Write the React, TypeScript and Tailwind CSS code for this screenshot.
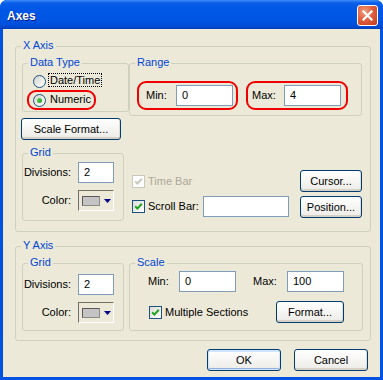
import React from "react";

function Group({ label, className, children }: { label: string; className: string; children?: React.ReactNode }) {
  return (
    <div className={`relative border border-[#D0D0BF] rounded-[3px] ${className}`}>
      <span className="absolute -top-[8px] left-[5px] px-[2px] bg-[#ECE9D8] text-[#0046D5] leading-[13px] whitespace-nowrap">
        {label}
      </span>
      {children}
    </div>
  );
}

function Btn({ label, className, isDefault }: { label: string; className: string; isDefault?: boolean }) {
  return (
    <div
      className={`flex items-center justify-center rounded-[3px] border border-[#003C74] bg-gradient-to-b from-white to-[#ECEBE6] ${
        isDefault
          ? "shadow-[inset_0_0_0_1px_#CEE7FF,inset_0_-2px_0_#97AEE2,inset_0_2px_0_#CEE7FF]"
          : "shadow-[inset_0_-2px_0_#D6D0C5,inset_-1px_0_0_#E2DED3]"
      } ${className}`}
    >
      <span className="leading-[13px]">{label}</span>
    </div>
  );
}

function Check({ disabled }: { disabled?: boolean }) {
  return (
    <span
      className={`w-[13px] h-[13px] shrink-0 flex items-center justify-center border ${
        disabled ? "border-[#CAC8BB] bg-white" : "border-[#1C5180] bg-gradient-to-br from-[#DCDCD7] to-white"
      }`}
    >
      <svg width="9" height="9" viewBox="0 0 9 9">
        <polyline
          points="1.2,4.2 3.4,6.6 7.8,1.8"
          fill="none"
          stroke={disabled ? "#CAC8BB" : "#21A121"}
          strokeWidth="2"
        />
      </svg>
    </span>
  );
}

function Radio({ checked }: { checked?: boolean }) {
  return (
    <span className="w-[13px] h-[13px] shrink-0 rounded-full border border-[#1C5180] bg-gradient-to-br from-[#D4D4CF] to-white flex items-center justify-center">
      {checked && <span className="w-[5px] h-[5px] rounded-full bg-gradient-to-br from-[#55D455] to-[#21A121]" />}
    </span>
  );
}

function TextBox({ value, className }: { value: string; className: string }) {
  return (
    <div className={`h-[21px] border border-[#7F9DB9] bg-white pl-[5px] flex items-center ${className}`}>
      <span className="leading-[13px]">{value}</span>
    </div>
  );
}

function ColorPick() {
  return (
    <div className="w-[36px] h-[21px] border border-t-[#716F64] border-l-[#716F64] border-r-white border-b-white bg-[#ECE9D8] flex items-center">
      <span className="ml-[3px] w-[18px] h-[10px] border border-t-[#5A5A5A] border-l-[#5A5A5A] border-r-[#8A8A8A] border-b-[#8A8A8A] bg-[#C4C4C4]" />
      <svg className="ml-[4px]" width="7" height="4" viewBox="0 0 7 4">
        <polygon points="0,0 7,0 3.5,4" fill="#000080" />
      </svg>
    </div>
  );
}

export default function App() {
  return (
    <div className="w-[383px] h-[380px] bg-[#0053E2] rounded-t-[7px] overflow-hidden flex flex-col font-['Liberation_Sans',Arial,sans-serif] text-[11px] leading-[13px] text-black">
      {/* title bar */}
      <div className="h-[29px] shrink-0 flex items-start pl-[7px] pr-[5px] bg-[linear-gradient(to_bottom,#3C8CF8_0px,#0A5EE8_3px,#0058E6_8px,#0055E3_20px,#004CD6_26px,#003DB8_29px)]">
        <span className="mt-[9px] text-[12px] leading-[14px] font-bold text-white [text-shadow:1px_1px_0_#0A1883]">
          Axes
        </span>
        <div className="ml-auto mt-[5px] w-[21px] h-[21px] rounded-[3px] border border-white bg-[radial-gradient(circle_at_35%_30%,#F0A080_0%,#E06040_45%,#C0391A_100%)] flex items-center justify-center">
          <svg width="11" height="11" viewBox="0 0 11 11">
            <path d="M1.5 1.5 L9.5 9.5 M9.5 1.5 L1.5 9.5" stroke="white" strokeWidth="2.2" strokeLinecap="square" />
          </svg>
        </div>
      </div>

      {/* client area */}
      <div className="mx-[3px] h-[348px] bg-[#ECE9D8] flex flex-col">
        {/* X Axis */}
        <Group label="X Axis" className="ml-[12px] mt-[17px] w-[356px] h-[186px] shrink-0">
          <div className="flex pl-[6px] pt-[16px]">
            {/* left column */}
            <div className="w-[107px] flex flex-col">
              <Group label="Data Type" className="w-[107px] h-[49px]">
                <div className="flex flex-col pl-[10px] pt-[9px]">
                  <div className="flex items-start">
                    <span className="mt-[2px]">
                      <Radio />
                    </span>
                    <span className="ml-[2px] px-[1px] border border-dotted border-black leading-[12px]">Date/Time</span>
                  </div>
                  <div className="flex items-start mt-[4px]">
                    <span className="mt-[2px]">
                      <Radio checked />
                    </span>
                    <span className="ml-[2px] px-[1px] border border-transparent leading-[12px]">Numeric</span>
                  </div>
                </div>
                <div className="absolute left-[4px] top-[26px] w-[69px] h-[20px] border-2 border-[#F00000] rounded-[9px]" />
              </Group>
              <Btn label="Scale Format..." className="-ml-[1px] mt-[6px] w-[100px] h-[22px]" />
              <Group label="Grid" className="mt-[13px] w-[102px] h-[68px]">
                <div className="flex flex-col pt-[8px]">
                  <div className="flex items-center">
                    <span className="w-[48px] text-right">Divisions:</span>
                    <TextBox value="2" className="ml-[7px] w-[36px]" />
                  </div>
                  <div className="flex items-center mt-[7px]">
                    <span className="w-[48px] text-right">Color:</span>
                    <span className="ml-[7px]">
                      <ColorPick />
                    </span>
                  </div>
                </div>
              </Group>
            </div>
            {/* right column */}
            <div className="w-[233px] flex flex-col">
              <Group label="Range" className="w-[233px] h-[53px]">
                <div className="flex items-center pt-[21px] pl-[16px]">
                  <span className="w-[30px]">Min:</span>
                  <TextBox value="0" className="w-[57px]" />
                  <span className="ml-[19px] w-[32px]">Max:</span>
                  <TextBox value="4" className="w-[57px]" />
                </div>
                <div className="absolute left-[7px] top-[17px] w-[101px] h-[29px] border-2 border-[#F00000] rounded-[9px]" />
                <div className="absolute left-[116px] top-[17px] w-[102px] h-[29px] border-2 border-[#F00000] rounded-[9px]" />
              </Group>
              <div className="mt-[54px] flex items-center h-[22px]">
                <span className="ml-[3px]">
                  <Check disabled />
                </span>
                <span className="ml-[3px] text-[#ACA899]">Time Bar</span>
                <Btn label="Cursor..." className="ml-auto w-[62px] h-[22px]" />
              </div>
              <div className="mt-[4px] flex items-start h-[22px]">
                <span className="ml-[3px] mt-[4px]">
                  <Check />
                </span>
                <span className="ml-[3px] mt-[4px] w-[55px]">Scroll Bar:</span>
                <TextBox value="" className="w-[86px]" />
                <Btn label="Position..." className="ml-auto w-[62px] h-[22px]" />
              </div>
            </div>
          </div>
        </Group>

        {/* Y Axis */}
        <Group label="Y Axis" className="ml-[12px] mt-[14px] w-[356px] h-[95px] shrink-0">
          <div className="flex pl-[6px] pt-[16px]">
            <Group label="Grid" className="w-[102px] h-[68px]">
              <div className="flex flex-col pt-[10px]">
                <div className="flex items-center">
                  <span className="w-[48px] text-right">Divisions:</span>
                  <TextBox value="2" className="ml-[7px] w-[36px]" />
                </div>
                <div className="flex items-center mt-[7px]">
                  <span className="w-[48px] text-right">Color:</span>
                  <span className="ml-[7px]">
                    <ColorPick />
                  </span>
                </div>
              </div>
            </Group>
            <Group label="Scale" className="ml-[5px] w-[234px] h-[68px]">
              <div className="flex flex-col pt-[7px]">
                <div className="flex items-center pl-[18px]">
                  <span className="w-[31px]">Min:</span>
                  <TextBox value="0" className="w-[57px]" />
                  <span className="ml-[17px] w-[34px]">Max:</span>
                  <TextBox value="100" className="w-[57px]" />
                </div>
                <div className="flex items-center mt-[9px] h-[22px]">
                  <div className="w-[146px] flex items-center pl-[19px]">
                    <Check />
                    <span className="ml-[3px] whitespace-nowrap">Multiple Sections</span>
                  </div>
                  <Btn label="Format..." className="w-[68px] h-[22px]" />
                </div>
              </div>
            </Group>
          </div>
        </Group>

        {/* bottom buttons */}
        <div className="mt-[8px] flex justify-end gap-[13px] pr-[12px]">
          <Btn label="OK" className="w-[74px] h-[22px]" isDefault />
          <Btn label="Cancel" className="w-[74px] h-[22px]" />
        </div>
      </div>
    </div>
  );
}
